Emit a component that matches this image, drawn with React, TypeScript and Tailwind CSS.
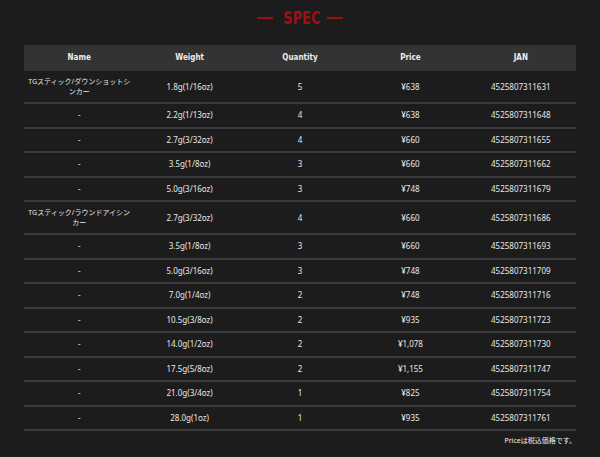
const rows: { name?: string[]; weight: string; qty: number; price: string; jan: string }[] = [
  { name: ['TGスティック/ダウンショットシ', 'ンカー'], weight: '1.8g(1/16oz)', qty: 5, price: '¥638', jan: '4525807311631' },
  { weight: '2.2g(1/13oz)', qty: 4, price: '¥638', jan: '4525807311648' },
  { weight: '2.7g(3/32oz)', qty: 4, price: '¥660', jan: '4525807311655' },
  { weight: '3.5g(1/8oz)', qty: 3, price: '¥660', jan: '4525807311662' },
  { weight: '5.0g(3/16oz)', qty: 3, price: '¥748', jan: '4525807311679' },
  { name: ['TGスティック/ラウンドアイシン', 'カー'], weight: '2.7g(3/32oz)', qty: 4, price: '¥660', jan: '4525807311686' },
  { weight: '3.5g(1/8oz)', qty: 3, price: '¥660', jan: '4525807311693' },
  { weight: '5.0g(3/16oz)', qty: 3, price: '¥748', jan: '4525807311709' },
  { weight: '7.0g(1/4oz)', qty: 2, price: '¥748', jan: '4525807311716' },
  { weight: '10.5g(3/8oz)', qty: 2, price: '¥935', jan: '4525807311723' },
  { weight: '14.0g(1/2oz)', qty: 2, price: '¥1,078', jan: '4525807311730' },
  { weight: '17.5g(5/8oz)', qty: 2, price: '¥1,155', jan: '4525807311747' },
  { weight: '21.0g(3/4oz)', qty: 1, price: '¥825', jan: '4525807311754' },
  { weight: '28.0g(1oz)', qty: 1, price: '¥935', jan: '4525807311761' },
];

const headers = ['Name', 'Weight', 'Quantity', 'Price', 'JAN'];

export default function App() {
  return (
    <div
      className="w-[600px] h-[457px] overflow-hidden bg-[#1c1c1c] text-[#e8e8e8] px-[24px]"
      style={{ fontFamily: '"Noto Sans", "Noto Sans CJK JP", sans-serif' }}
    >
      {/* Title */}
      <div className="h-[45px] flex items-start justify-center pt-[7px]">
        <div
          className="flex items-center gap-[6px] text-[#9e1014] font-bold text-[18px] leading-[22px]"
          style={{ fontFamily: '"DejaVu Sans Condensed", "DejaVu Sans", sans-serif' }}
        >
          <span className="block w-[16px] h-[2px] bg-[#9e1014]" />
          <span className="block w-[42px] text-center scale-x-[0.8]">SPEC</span>
          <span className="block w-[16px] h-[2px] bg-[#9e1014]" />
        </div>
      </div>

      {/* Table */}
      <div className="w-[552px]">
        <div
          className="grid grid-cols-5 h-[26px] items-center bg-[#333333] text-[8px] font-bold text-center text-[#eeeeee]"
          style={{ fontFamily: '"DejaVu Sans Condensed", "DejaVu Sans", sans-serif' }}
        >
          {headers.map(h => (
            <div key={h}>{h}</div>
          ))}
        </div>
        {rows.map(r => (
          <div
            key={r.jan}
            className={`grid grid-cols-5 items-center text-center text-[8px] border-b-2 border-[#3a3a3a] ${r.name ? 'h-[33px]' : 'h-[24.5px]'}`}
          >
            <div className="leading-[10px] flex flex-col items-center whitespace-nowrap">
              {r.name ? (
                <>
                  <span className="text-[7px]">{r.name[0]}</span>
                  <span className="text-[7px]">{r.name[1]}</span>
                </>
              ) : (
                '-'
              )}
            </div>
            <div>{r.weight}</div>
            <div>{r.qty}</div>
            <div>{r.price}</div>
            <div>{r.jan}</div>
          </div>
        ))}
        <div className="flex justify-end pt-[5px] text-[7px] text-[#eeeeee]">Priceは税込価格です。</div>
      </div>
    </div>
  );
}
